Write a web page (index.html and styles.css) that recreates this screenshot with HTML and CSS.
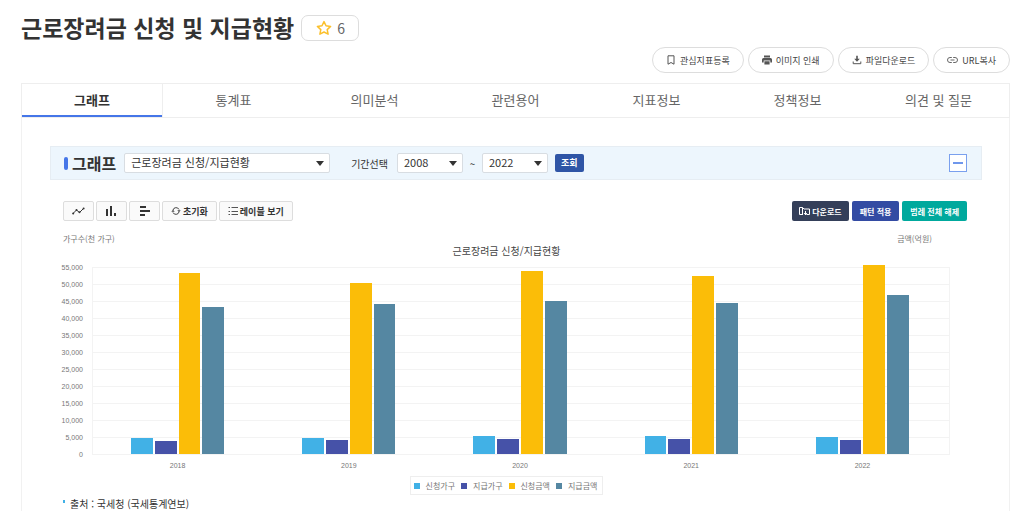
FILE: index.html
```html
<!DOCTYPE html>
<html lang="ko">
<head>
<meta charset="utf-8">
<title>근로장려금 신청 및 지급현황</title>
<link rel="stylesheet" href="styles.css">
</head>
<body>
<div class="page">
  <header class="head">
    <h1 class="title">근로장려금 신청 및 지급현황</h1>
    <button class="star" type="button">
      <svg width="16" height="16" viewBox="0 0 16 16" fill="none" stroke="#fbc02d" stroke-width="1.5" stroke-linejoin="round"><path d="M8 1.6l2 4.2 4.6.6-3.4 3.2.9 4.6L8 12l-4.1 2.2.9-4.6L1.4 6.4 6 5.800z"/></svg>
      6
    </button>
  </header>

  <div class="actions">
    <button class="pill" type="button">
      <svg width="10" height="10" viewBox="0 0 10 10" fill="none" stroke="#555"><path d="M2 .8h6v8.400L5 7.500 2 9.200z"/></svg>관심지표등록
    </button>
    <button class="pill" type="button">
      <svg width="10" height="10" viewBox="0 0 10 10" fill="#555"><path d="M2 .5h6v2H2zM1.500 3h7Q10 3 10 4.500V7.500H8.300V5.600H1.700V7.500H0V4.500Q0 3 1.500 3zM2.400 6.300h5.200v3.200H2.400z"/></svg>이미지 인쇄
    </button>
    <button class="pill" type="button">
      <svg width="10" height="10" viewBox="0 0 10 10" fill="#555"><path d="M4.200.8h1.600v3h2L5 6.700 2.200 3.800h2z"/><path d="M1.200 6.500v2.200h7.600V6.500" fill="none" stroke="#555"/></svg>파일다운로드
    </button>
    <button class="pill" type="button">
      <svg width="11" height="10" viewBox="0 0 11 10" fill="none" stroke="#666"><path d="M4.800 2.500H3a2.500 2.500 0 0 0 0 5h1.800M6.200 2.500H8a2.500 2.500 0 0 1 0 5H6.200M3.500 5h4"/></svg>URL복사
    </button>
  </div>

  <nav class="tabs">
    <a class="tab tab-on" href="#graph">그래프</a>
    <a class="tab" href="#table">통계표</a>
    <a class="tab" href="#meaning">의미분석</a>
    <a class="tab" href="#terms">관련용어</a>
    <a class="tab" href="#index">지표정보</a>
    <a class="tab" href="#policy">정책정보</a>
    <a class="tab" href="#opinion">의견 및 질문</a>
  </nav>

  <main class="panel" id="graph">
    <form class="filter">
      <h2 class="filter-title"><label for="series">그래프</label></h2>
      <span class="pick pick-series"><select id="series"><option>근로장려금 신청/지급현황</option></select></span>
      <label class="period" for="from">기간선택</label>
      <span class="pick"><select id="from"><option>2008</option></select></span>
      <span class="tilde">~</span>
      <span class="pick"><select id="to" aria-label="종료연도"><option>2022</option></select></span>
      <button class="search" type="button">조회</button>
      <button class="fold" type="button" aria-label="접기"></button>
    </form>

    <div class="tools">
      <button class="tool" type="button" aria-label="선 그래프">
        <svg width="13" height="12" viewBox="0 0 13 12" fill="none" stroke="#333"><path d="M1 8.500l3.500-3.500 3 2.500 4-4"/><g fill="#333" stroke="none"><circle cx="1.200" cy="8.500" r="1"/><circle cx="4.500" cy="5" r="1"/><circle cx="7.500" cy="7.300" r="1"/><circle cx="11.600" cy="3.500" r="1"/></g></svg>
      </button>
      <button class="tool" type="button" aria-label="세로 막대">
        <svg width="13" height="12" viewBox="0 0 13 12" fill="#333"><path d="M1 4h2v7H1zM5 1h2v10H5zM9 8h2v3H9z"/></svg>
      </button>
      <button class="tool" type="button" aria-label="가로 막대">
        <svg width="13" height="12" viewBox="0 0 13 12" fill="#333"><path d="M2 1h6v2H2zM2 5h10v2H2zM2 9h5v2H2z"/></svg>
      </button>
      <button class="tool" type="button">
        <svg width="10" height="10" viewBox="0 0 10 10" fill="none" stroke="#444"><path d="M2 4a3.200 3.200 0 0 1 6-.5M8 6a3.200 3.200 0 0 1-6 .5"/><path d="M.3 5.800h3.400L2 3.800zM6.300 4.200h3.400L8 6.200z" fill="#444" stroke="none"/></svg>초기화
      </button>
      <button class="tool" type="button">
        <svg width="10" height="10" viewBox="0 0 10 10" fill="none" stroke="#555"><path d="M3.500 1.500H10M3.500 5.500H10M3.500 8.500H10M.5 1.500H2M.5 5.500H2M.5 8.500H2"/></svg>레이블 보기
      </button>
      <button class="tool solid navy" type="button">
        <svg width="11" height="10" viewBox="0 0 11 10" fill="none" stroke="#fff"><path d="M4 8.500H.5v-7h3L5 3h5.500v5.500H7.500M3.500 1.500V8.500M6.500 5v4M5 7l1.500 1.700L8 7"/></svg>다운로드
      </button>
      <button class="tool solid blue" type="button">패턴 적용</button>
      <button class="tool solid teal" type="button">범례 전체 해제</button>
    </div>

    <figure class="chart">
      <div class="units"><span>가구수(천 가구)</span><span>금액(억원)</span></div>
      <figcaption class="chart-title">근로장려금 신청/지급현황</figcaption>
      <div class="yaxis"><span>55,000</span><span>50,000</span><span>45,000</span><span>40,000</span><span>35,000</span><span>30,000</span><span>25,000</span><span>20,000</span><span>15,000</span><span>10,000</span><span>5,000</span><span>0</span></div>
      <div class="plot">
        <div class="grid"><i></i><i></i><i></i><i></i><i></i><i></i><i></i><i></i><i></i><i></i><i></i></div>
        <div class="group"><b class="bar s1" style="height:8.7%"></b><b class="bar s2" style="height:7.2%"></b><b class="bar s3" style="height:96.7%"></b><b class="bar s4" style="height:78.5%"></b></div>
        <div class="group"><b class="bar s1" style="height:8.7%"></b><b class="bar s2" style="height:7.6%"></b><b class="bar s3" style="height:91.3%"></b><b class="bar s4" style="height:80.2%"></b></div>
        <div class="group"><b class="bar s1" style="height:9.5%"></b><b class="bar s2" style="height:8%"></b><b class="bar s3" style="height:97.8%"></b><b class="bar s4" style="height:81.8%"></b></div>
        <div class="group"><b class="bar s1" style="height:9.4%"></b><b class="bar s2" style="height:8%"></b><b class="bar s3" style="height:95.3%"></b><b class="bar s4" style="height:81%"></b></div>
        <div class="group"><b class="bar s1" style="height:9.1%"></b><b class="bar s2" style="height:7.6%"></b><b class="bar s3" style="height:100.9%"></b><b class="bar s4" style="height:85%"></b></div>
      </div>
      <div class="xaxis"><span>2018</span><span>2019</span><span>2020</span><span>2021</span><span>2022</span></div>
      <ul class="legend">
        <li><i class="key s1"></i>신청가구</li>
        <li><i class="key s2"></i>지급가구</li>
        <li><i class="key s3"></i>신청금액</li>
        <li><i class="key s4"></i>지급금액</li>
      </ul>
    </figure>

    <p class="source">출처 : 국세청 (국세통계연보)</p>
  </main>
</div>
</body>
</html>
```

FILE: styles.css
```css
* { box-sizing: border-box; }

body {
  margin: 0;
  background: #fff;
  color: #333;
  font-family: "Noto Sans CJK KR", sans-serif;
  font-size: 10px;
}

button, select { font-family: inherit; margin: 0; }
button { cursor: pointer; }
h1, h2, p, ul, figure { margin: 0; padding: 0; }

.page {
  display: flex;
  flex-direction: column;
  min-height: 100vh;
  padding: 14px 14px 0 21px;
}

.head { display: flex; align-items: center; gap: 7px; height: 27px; }
.title { font-size: 23px; line-height: 27px; font-weight: 700; }
.star {
  display: flex;
  align-items: center;
  gap: 5px;
  height: 26px;
  padding: 0 13px 0 14px;
  border: 1px solid #ddd;
  border-radius: 7px;
  background: #fff;
  color: #666;
  font-size: 14px;
}

.actions { display: flex; justify-content: flex-end; gap: 4px; margin: 6px 0 10px; }
.pill {
  display: flex;
  align-items: center;
  gap: 4px;
  height: 26px;
  padding: 0 13px;
  border: 1px solid #ddd;
  border-radius: 13px;
  background: #fff;
  color: #444;
  font-size: 9px;
}

.tabs {
  display: grid;
  grid-template-columns: repeat(7, 1fr);
  height: 35px;
  border: 1px solid #eee;
}
.tab {
  display: flex;
  align-items: center;
  justify-content: center;
  padding-bottom: 3px;
  color: #666;
  font-size: 13px;
  text-decoration: none;
}
.tab-on {
  border-right: 1px solid #eee;
  box-shadow: inset 0 -2px #4576e8;
  color: #333;
  font-weight: 700;
}

.panel {
  flex: 1;
  padding: 28px 27px 0 28px;
  border: solid #f1f1f1;
  border-width: 0 1px;
}

.filter {
  display: flex;
  align-items: center;
  height: 34px;
  padding: 0 14px 0 13px;
  border: 1px solid #e6edf3;
  background: #edf6fd;
}
.filter-title {
  display: flex;
  align-items: center;
  gap: 4px;
  margin-right: 8px;
  font-size: 16px;
  line-height: 20px;
}
.filter-title::before {
  content: "";
  width: 4px;
  height: 13px;
  border-radius: 2px;
  background: #4576e8;
}
.pick { position: relative; width: 66px; }
.pick-series { width: 206px; margin-right: 21px; }
.pick::after {
  content: "";
  position: absolute;
  right: 6px;
  top: 8px;
  border: solid transparent;
  border-width: 5px 4px 0;
  border-top-color: #333;
  pointer-events: none;
}
.pick select {
  display: block;
  appearance: none;
  width: 100%;
  height: 20px;
  padding: 0 6px 2px;
  border: 1px solid #d8dde2;
  border-radius: 2px;
  background: #fff;
  color: #333;
  font-size: 11px;
  line-height: 16px;
}
.period { margin-right: 9px; font-size: 10px; }
.tilde { width: 19px; text-align: center; font-size: 10px; }
.search {
  height: 18px;
  margin-left: 7px;
  padding: 0 6px;
  border: 0;
  border-radius: 2px;
  background: #2f55a6;
  color: #fff;
  font-size: 9px;
  line-height: 16px;
  font-weight: 700;
}
.fold {
  display: flex;
  align-items: center;
  justify-content: center;
  width: 18px;
  height: 18px;
  margin-left: auto;
  padding: 0;
  border: 1px solid #7aa0ee;
  background: #fff;
}
.fold::before { content: ""; width: 10px; height: 2px; background: #6f97ec; }

.tools { display: flex; gap: 2px; margin: 21px 15px 0 13px; }
.tool {
  display: flex;
  align-items: center;
  gap: 2px;
  height: 20px;
  padding: 0 8px;
  border: 1px solid #ddd;
  border-radius: 2px;
  background: #fafafa;
  color: #333;
  font-size: 9px;
  font-weight: 700;
}
.solid { margin-left: 1px; border: 0; color: #fff; font-size: 8px; }
.navy { margin-left: auto; padding: 0 7px; background: #343f59; }
.blue { background: #334ba3; }
.teal { background: #00a99d; }

.chart {
  display: grid;
  grid-template-columns: 20px 1fr;
  column-gap: 9px;
  margin: 12px 32px 0 13px;
  color: #777;
}
.units {
  grid-column: 1 / -1;
  display: flex;
  justify-content: space-between;
  padding-right: 18px;
  font-size: 8px;
  line-height: 12px;
}
.chart-title {
  grid-column: 1 / -1;
  color: #444;
  font-size: 10px;
  line-height: 12px;
  text-align: center;
}
.yaxis {
  display: flex;
  flex-direction: column;
  justify-content: space-between;
  justify-self: end;
  height: 197px;
  margin-top: 6px;
  text-align: right;
  font-family: "Liberation Sans", sans-serif;
  font-size: 7px;
  line-height: 10px;
}
.plot {
  position: relative;
  display: flex;
  height: 188px;
  margin-top: 10px;
  border: solid #f3f3f3;
  border-width: 0 1px 1px;
}
.grid { position: absolute; inset: 0; display: flex; flex-direction: column; }
.grid i { flex: 1; border-top: 1px solid #f3f3f3; }
.group {
  position: relative;
  flex: 1;
  display: flex;
  align-items: flex-end;
  gap: 2px;
  padding: 0 40px 0 38px;
}
.bar { flex: 1; }
.s1 { background: #41b1e6; }
.s2 { background: #4652a8; }
.s3 { background: #fbbd08; }
.s4 { background: #5587a2; }
.xaxis {
  grid-column: 2;
  display: flex;
  padding-right: 2px;
  font-family: "Liberation Sans", sans-serif;
  font-size: 7px;
  line-height: 12px;
}
.xaxis span { flex: 1; text-align: center; }
.legend {
  grid-column: 1 / -1;
  justify-self: center;
  display: flex;
  gap: 6px;
  margin-top: 4px;
  padding: 2px 5px 2px 3px;
  border: 1px solid #eee;
  list-style: none;
  font-size: 8px;
  line-height: 13px;
}
.legend li { display: flex; align-items: center; gap: 6px; }
.key { width: 6px; height: 6px; }

.source {
  display: flex;
  gap: 5px;
  margin: 2px 13px 0;
  font-size: 10px;
  line-height: 14px;
}
.source::before {
  content: "";
  width: 2px;
  height: 3px;
  margin-top: 3px;
  background: #41b1e6;
}
```
